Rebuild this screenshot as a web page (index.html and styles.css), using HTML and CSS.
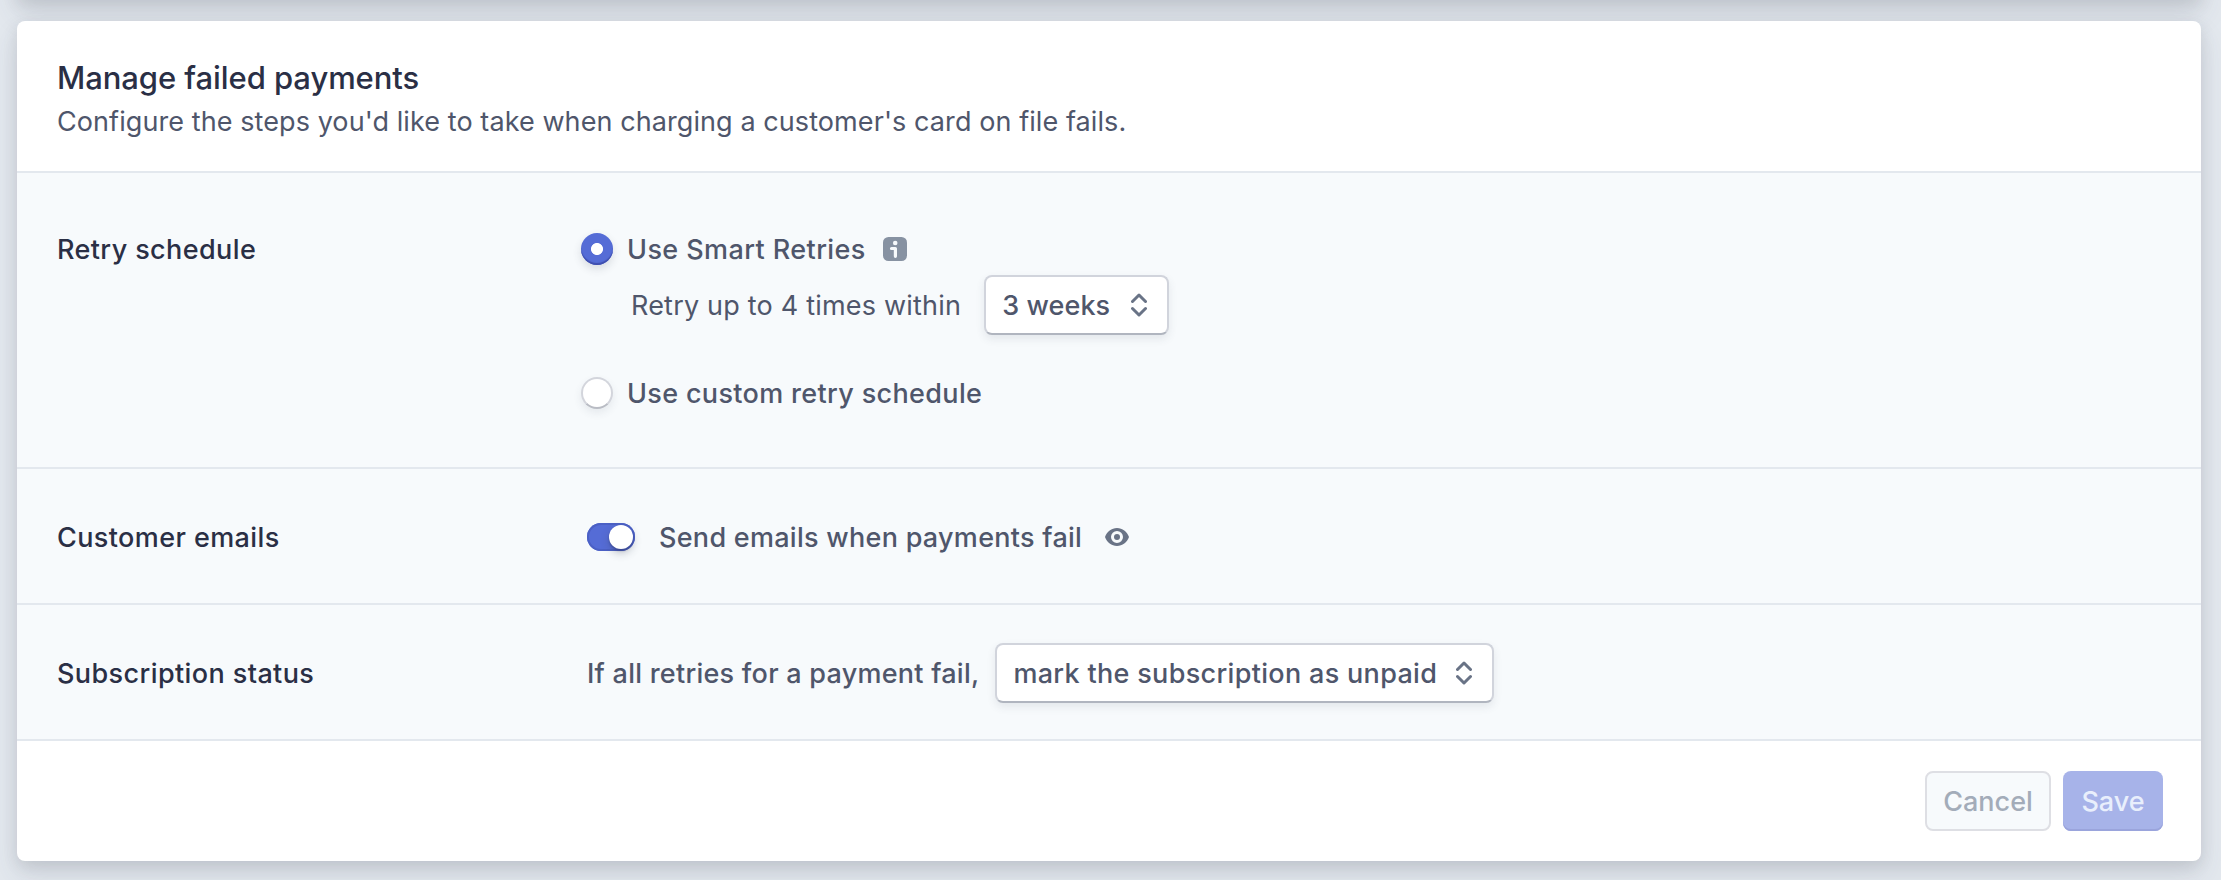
FILE: index.html
```html
<!DOCTYPE html>
<html lang="en">
<head>
<meta charset="utf-8">
<title>Manage failed payments</title>
<link rel="stylesheet" href="styles.css">
</head>
<body>
<div class="previous-card"></div>
<main class="card">
  <header class="card-header">
    <h1 class="title">Manage failed payments</h1>
    <p class="description">Configure the steps you'd like to take when charging a customer's card on file fails.</p>
  </header>
  <section class="row row-retry">
    <h2 class="label">Retry schedule</h2>
    <div class="options">
      <div class="option">
        <span class="radio radio-on"></span>
        <span class="text t-smart">Use Smart Retries</span>
        <svg class="info" width="24" height="24" viewBox="0 0 24 24"><rect width="24" height="24" rx="5.500" fill="#8792a2"/><circle cx="12.200" cy="6" r="2.300" fill="#f7fafc"/><path d="M8.500 11.500H12.400V19.300" fill="none" stroke="#f7fafc" stroke-width="3.200" stroke-linecap="round" stroke-linejoin="round"/></svg>
      </div>
      <div class="within">
        <span class="text regular">Retry up to 4 times within</span>
        <div class="select select-weeks">
          <span class="text t-weeks">3 weeks</span>
          <svg width="16" height="24" viewBox="0 0 16 24"><path d="M1.500 8.500L8 2L14.500 8.500M1.500 15.500L8 22L14.500 15.500" class="chevron"/></svg>
        </div>
      </div>
      <div class="option">
        <span class="radio"></span>
        <span class="text t-custom">Use custom retry schedule</span>
      </div>
    </div>
  </section>
  <section class="row">
    <h2 class="label">Customer emails</h2>
    <div class="field">
      <span class="toggle"><span class="knob"></span></span>
      <span class="text t-send">Send emails when payments fail</span>
      <svg class="eye" width="24" height="20" viewBox="0 0 24 20"><path fill="#697386" fill-rule="evenodd" d="M12 1C6.500 1 2 4.500 0 10C2 15.500 6.500 19 12 19S22 15.500 24 10C22 4.500 17.500 1 12 1ZM12 4A6 6 0 0 1 12 16A6 6 0 0 1 12 4Z"/><circle cx="12" cy="10" r="3" fill="#697386"/></svg>
    </div>
  </section>
  <section class="row">
    <h2 class="label">Subscription status</h2>
    <div class="field">
      <span class="text t-ifall">If all retries for a payment fail,</span>
      <div class="select select-status">
        <span class="text t-mark">mark the subscription as unpaid</span>
        <svg width="16" height="24" viewBox="0 0 16 24"><path d="M1.500 8.500L8 2L14.500 8.500M1.500 15.500L8 22L14.500 15.500" class="chevron"/></svg>
      </div>
    </div>
  </section>
  <footer class="card-footer">
    <button class="button cancel">Cancel</button>
    <button class="button save">Save</button>
  </footer>
</main>
</body>
</html>
```

FILE: styles.css
```css
* { box-sizing: border-box; }
body {
  margin: 0;
  height: 880px;
  overflow: hidden;
  background: #e3e8ee;
  font-family: Inter, "Liberation Sans", sans-serif;
  font-size: 27px;
  line-height: 40px;
  color: #4f566b;
}
h1, h2, p { margin: 0; }
.previous-card, .card {
  margin: 0 20px 0 17px;
  background: #fff;
  box-shadow: 0 14px 28px 0 rgba(60, 66, 87, .12), 0 5px 16px rgba(0, 0, 0, .09);
}
.previous-card { height: 200px; margin-top: -200px; }
.card {
  position: relative;
  margin-top: 21px;
  height: 840px;
  border-radius: 8px;
}
.card-header { height: 150px; padding: 37px 40px 0; }
.title { font-size: 31px; font-weight: 500; color: #2a2f45; letter-spacing: -.07px; white-space: nowrap; }
.description { margin-top: 4px; letter-spacing: .08px; white-space: nowrap; }
.row {
  display: flex;
  align-items: center;
  height: 136px;
  padding: 2px 0 0 40px;
  border-top: 2px solid #e3e8ee;
  background: #f7fafc;
}
.row-retry { height: 296px; align-items: flex-start; padding-top: 56px; }
.label {
  width: 530px;
  padding-top: 2px;
  font-size: 27px;
  font-weight: 500;
  letter-spacing: .4px;
  color: #2a2f45;
  white-space: nowrap;
}
.row-retry .label { padding-top: 1px; }
.options { margin-left: -6px; }
.option { display: flex; align-items: center; height: 40px; }
.text { padding-top: 2px; font-weight: 500; white-space: nowrap; }
.regular { font-weight: 400; letter-spacing: .2px; }
.t-smart { letter-spacing: .41px; }
.t-weeks { letter-spacing: .1px; }
.t-custom { letter-spacing: .34px; }
.t-send { letter-spacing: .28px; }
.t-ifall { letter-spacing: .25px; }
.t-mark { letter-spacing: .32px; }
.radio {
  width: 32px;
  height: 32px;
  margin-right: 14px;
  border-radius: 50%;
  background: #fff;
  border: 2px solid #d3d5dc;
  border-bottom-color: #b9bcc4;
  box-shadow: 0 4px 8px rgba(60, 66, 87, .09);
}
.radio-on {
  border: 0;
  background: radial-gradient(circle, #fff 5.600px, #556cd6 6.400px);
  box-shadow: inset 0 -2px 1px #3f4fae, 0 4px 8px rgba(60, 66, 87, .16);
}
.info { margin-left: 17px; }
.within { display: flex; align-items: center; height: 60px; margin: 6px 0 38px 50px; }
.select {
  display: flex;
  align-items: center;
  justify-content: space-between;
  height: 60px;
  padding: 0 20px 0 16px;
  border: 2px solid #d1d4dc;
  border-bottom-color: #b0b5bf;
  border-radius: 8px;
  background: #fff;
  box-shadow: 0 4px 8px rgba(60, 66, 87, .1);
}
.select-weeks { width: 185px; margin-left: 23px; }
.select-status { width: 499px; margin-left: 16px; }
.chevron { fill: none; stroke: #697386; stroke-width: 3; stroke-linecap: round; stroke-linejoin: round; }
.field { display: flex; align-items: center; }
.toggle {
  display: flex;
  justify-content: flex-end;
  width: 48px;
  height: 28px;
  margin-right: 24px;
  padding: 2px;
  border-radius: 14px;
  background: #556cd6;
  box-shadow: inset 0 0 0 2px #4b60c5;
}
.knob { width: 24px; height: 24px; border-radius: 50%; background: #fff; box-shadow: 0 4px 8px rgba(60, 66, 87, .3), 0 2px 2px rgba(20, 30, 90, .3); }
.eye { margin-left: 23px; }
.card-footer {
  display: flex;
  justify-content: flex-end;
  gap: 12px;
  padding: 30px 38px 0 0;
  border-top: 2px solid #e3e8ee;
}
.button { height: 60px; padding: 2px 0 0; border-radius: 8px; font: 500 27px/40px Inter, sans-serif; }
.cancel { width: 126px; border: 2px solid #dedfe4; background: #f7fafc; color: #a3acb9; }
.save { width: 100px; border: 0; background: #a7b3e9; color: #e9effc; box-shadow: inset 0 -2px 0 #9aa4dc; }
```
